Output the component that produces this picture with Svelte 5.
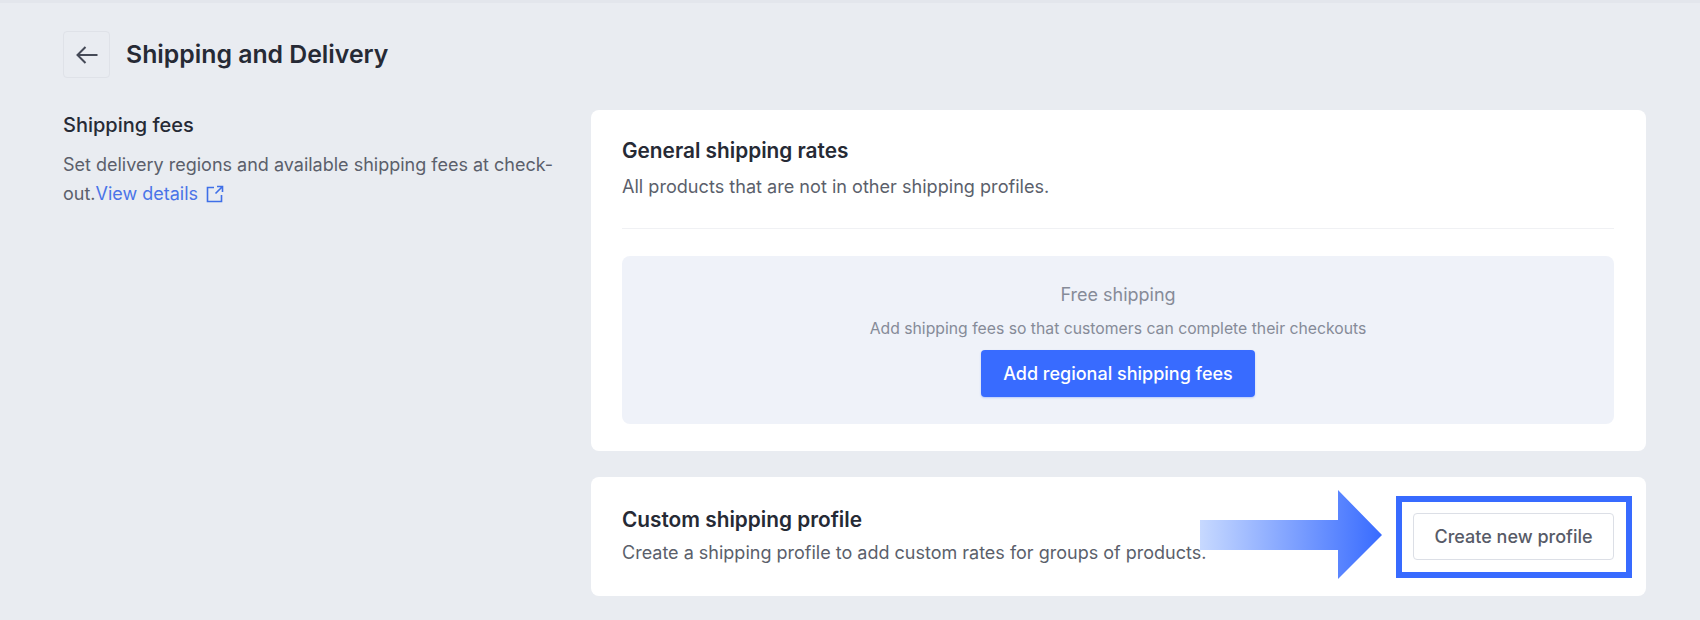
<script>
  const title = 'Shipping and Delivery';
</script>

<div class="page">
  <div class="topbar"></div>

  <header class="head">
    <button class="back" aria-label="Back">
      <svg width="24" height="24" viewBox="0 0 24 24" fill="none" stroke="#454a57" stroke-width="2">
        <path d="M22.500 12H2.500M10.500 4 2.500 12l8 8" />
      </svg>
    </button>
    <h1>{title}</h1>
  </header>

  <div class="columns">
    <aside class="intro">
      <h2>Shipping fees</h2>
      <p>
        Set delivery regions and available shipping fees at check-out.<a href="#details">View details
          <svg class="ext" width="18" height="18" viewBox="0 0 18 18" fill="none" stroke="#3f6fe8" stroke-width="1.6">
            <path d="M8 2.500H1.500v14h14V10M9.500 8.500 16 2M11 1.500h5.500V7" />
          </svg>
        </a>
      </p>
    </aside>

    <main class="cards">
      <section class="card general">
        <h3>General shipping rates</h3>
        <p class="sub">All products that are not in other shipping profiles.</p>
        <hr />
        <div class="empty">
          <div class="empty-title">Free shipping</div>
          <div class="empty-sub">Add shipping fees so that customers can complete their checkouts</div>
          <button class="primary">Add regional shipping fees</button>
        </div>
      </section>

      <section class="card custom">
        <div class="custom-text">
          <h3>Custom shipping profile</h3>
          <p class="sub">Create a shipping profile to add custom rates for groups of products.</p>
        </div>
        <button class="secondary">Create new profile</button>

        <svg class="arrow" width="182" height="89" viewBox="0 0 182 89">
          <defs>
            <linearGradient id="arrowFill" x1="0" x2="1" y1="0" y2="0">
              <stop offset="0" stop-color="#c7d9ff" />
              <stop offset="1" stop-color="#386bff" />
            </linearGradient>
          </defs>
          <path d="M0 30H138V0L182 45 138 89V60H0Z" fill="url(#arrowFill)" />
        </svg>
        <div class="highlight"></div>
      </section>
    </main>
  </div>
</div>

<style>
  :global(body) {
    margin: 0;
    background: #e9ecf1;
    font-family: Inter, 'Noto Sans', sans-serif;
  }

  .page {
    height: 620px;
    overflow: hidden;
    box-sizing: border-box;
  }

  .topbar {
    height: 3px;
    background: #e3e6ec;
  }

  .head {
    display: flex;
    align-items: center;
    gap: 16px;
    padding: 28px 0 0 63px;
  }

  .back {
    width: 47px;
    height: 47px;
    display: flex;
    align-items: center;
    justify-content: center;
    padding: 0;
    background: transparent;
    border: 1px solid #dfe2e8;
    border-radius: 4px;
  }

  h1 {
    margin: 0 0 2px;
    font-size: 24.800px;
    line-height: 30px;
    font-weight: 600;
    color: #262a35;
  }

  .columns {
    display: grid;
    grid-template-columns: 528px 1055px;
    padding: 32px 0 0 63px;
  }

  .intro h2 {
    margin: 0;
    padding-top: 1px;
    font-size: 20px;
    line-height: 28px;
    font-weight: 500;
    color: #262a35;
  }

  .intro p {
    width: 500px;
    margin: 11px 0 0;
    font-size: 18px;
    line-height: 29px;
    color: #5b5f6b;
  }

  .intro a {
    color: #4a74e8;
    text-decoration: none;
  }

  .ext {
    vertical-align: -3px;
    margin-left: 3px;
  }

  .cards {
    display: flex;
    flex-direction: column;
    gap: 26px;
  }

  .card {
    position: relative;
    background: #fff;
    border-radius: 8px;
    box-sizing: border-box;
    padding: 0 32px 0 31px;
  }

  .general {
    height: 341px;
    padding-top: 28px;
  }

  .custom {
    height: 119px;
    display: flex;
    align-items: center;
    justify-content: space-between;
  }

  .custom-text {
    margin-bottom: 2px;
  }

  .custom-text .sub {
    margin-top: 8px;
    font-size: 18px;
  }

  h3 {
    margin: 0;
    font-size: 20.800px;
    line-height: 26px;
    font-weight: 600;
    color: #262a35;
  }

  .sub {
    margin: 10px 0 0;
    font-size: 18.100px;
    line-height: 24px;
    color: #5b5f6b;
  }

  hr {
    height: 1px;
    border: 0;
    background: #f0f1f4;
    margin: 30px 0 27px;
  }

  .empty {
    height: 168px;
    box-sizing: border-box;
    padding-top: 27px;
    background: #eff2f9;
    border-radius: 8px;
    display: flex;
    flex-direction: column;
    align-items: center;
    text-align: center;
  }

  .empty-title {
    font-size: 18px;
    line-height: 24px;
    color: #868b98;
  }

  .empty-sub {
    margin-top: 11px;
    font-size: 15.750px;
    line-height: 22px;
    color: #868b98;
  }

  button {
    font-family: inherit;
    box-sizing: border-box;
  }

  .primary {
    width: 274px;
    height: 47px;
    margin-top: 10px;
    padding-top: 1px;
    background: #386bff;
    color: #fff;
    border: 0;
    border-radius: 4px;
    font-size: 18px;
    font-weight: 500;
    box-shadow: 0 1px 2px rgba(56, 107, 255, 0.3);
  }

  .secondary {
    width: 201px;
    height: 47px;
    background: #fff;
    color: #575b67;
    border: 1px solid #dcdfe6;
    border-radius: 4px;
    font-size: 18px;
    font-weight: 500;
  }

  .arrow {
    position: absolute;
    left: 609px;
    top: 13px;
  }

  .highlight {
    position: absolute;
    left: 805px;
    top: 19px;
    width: 236px;
    height: 82px;
    box-sizing: border-box;
    border: 6px solid #386bff;
  }
</style>
